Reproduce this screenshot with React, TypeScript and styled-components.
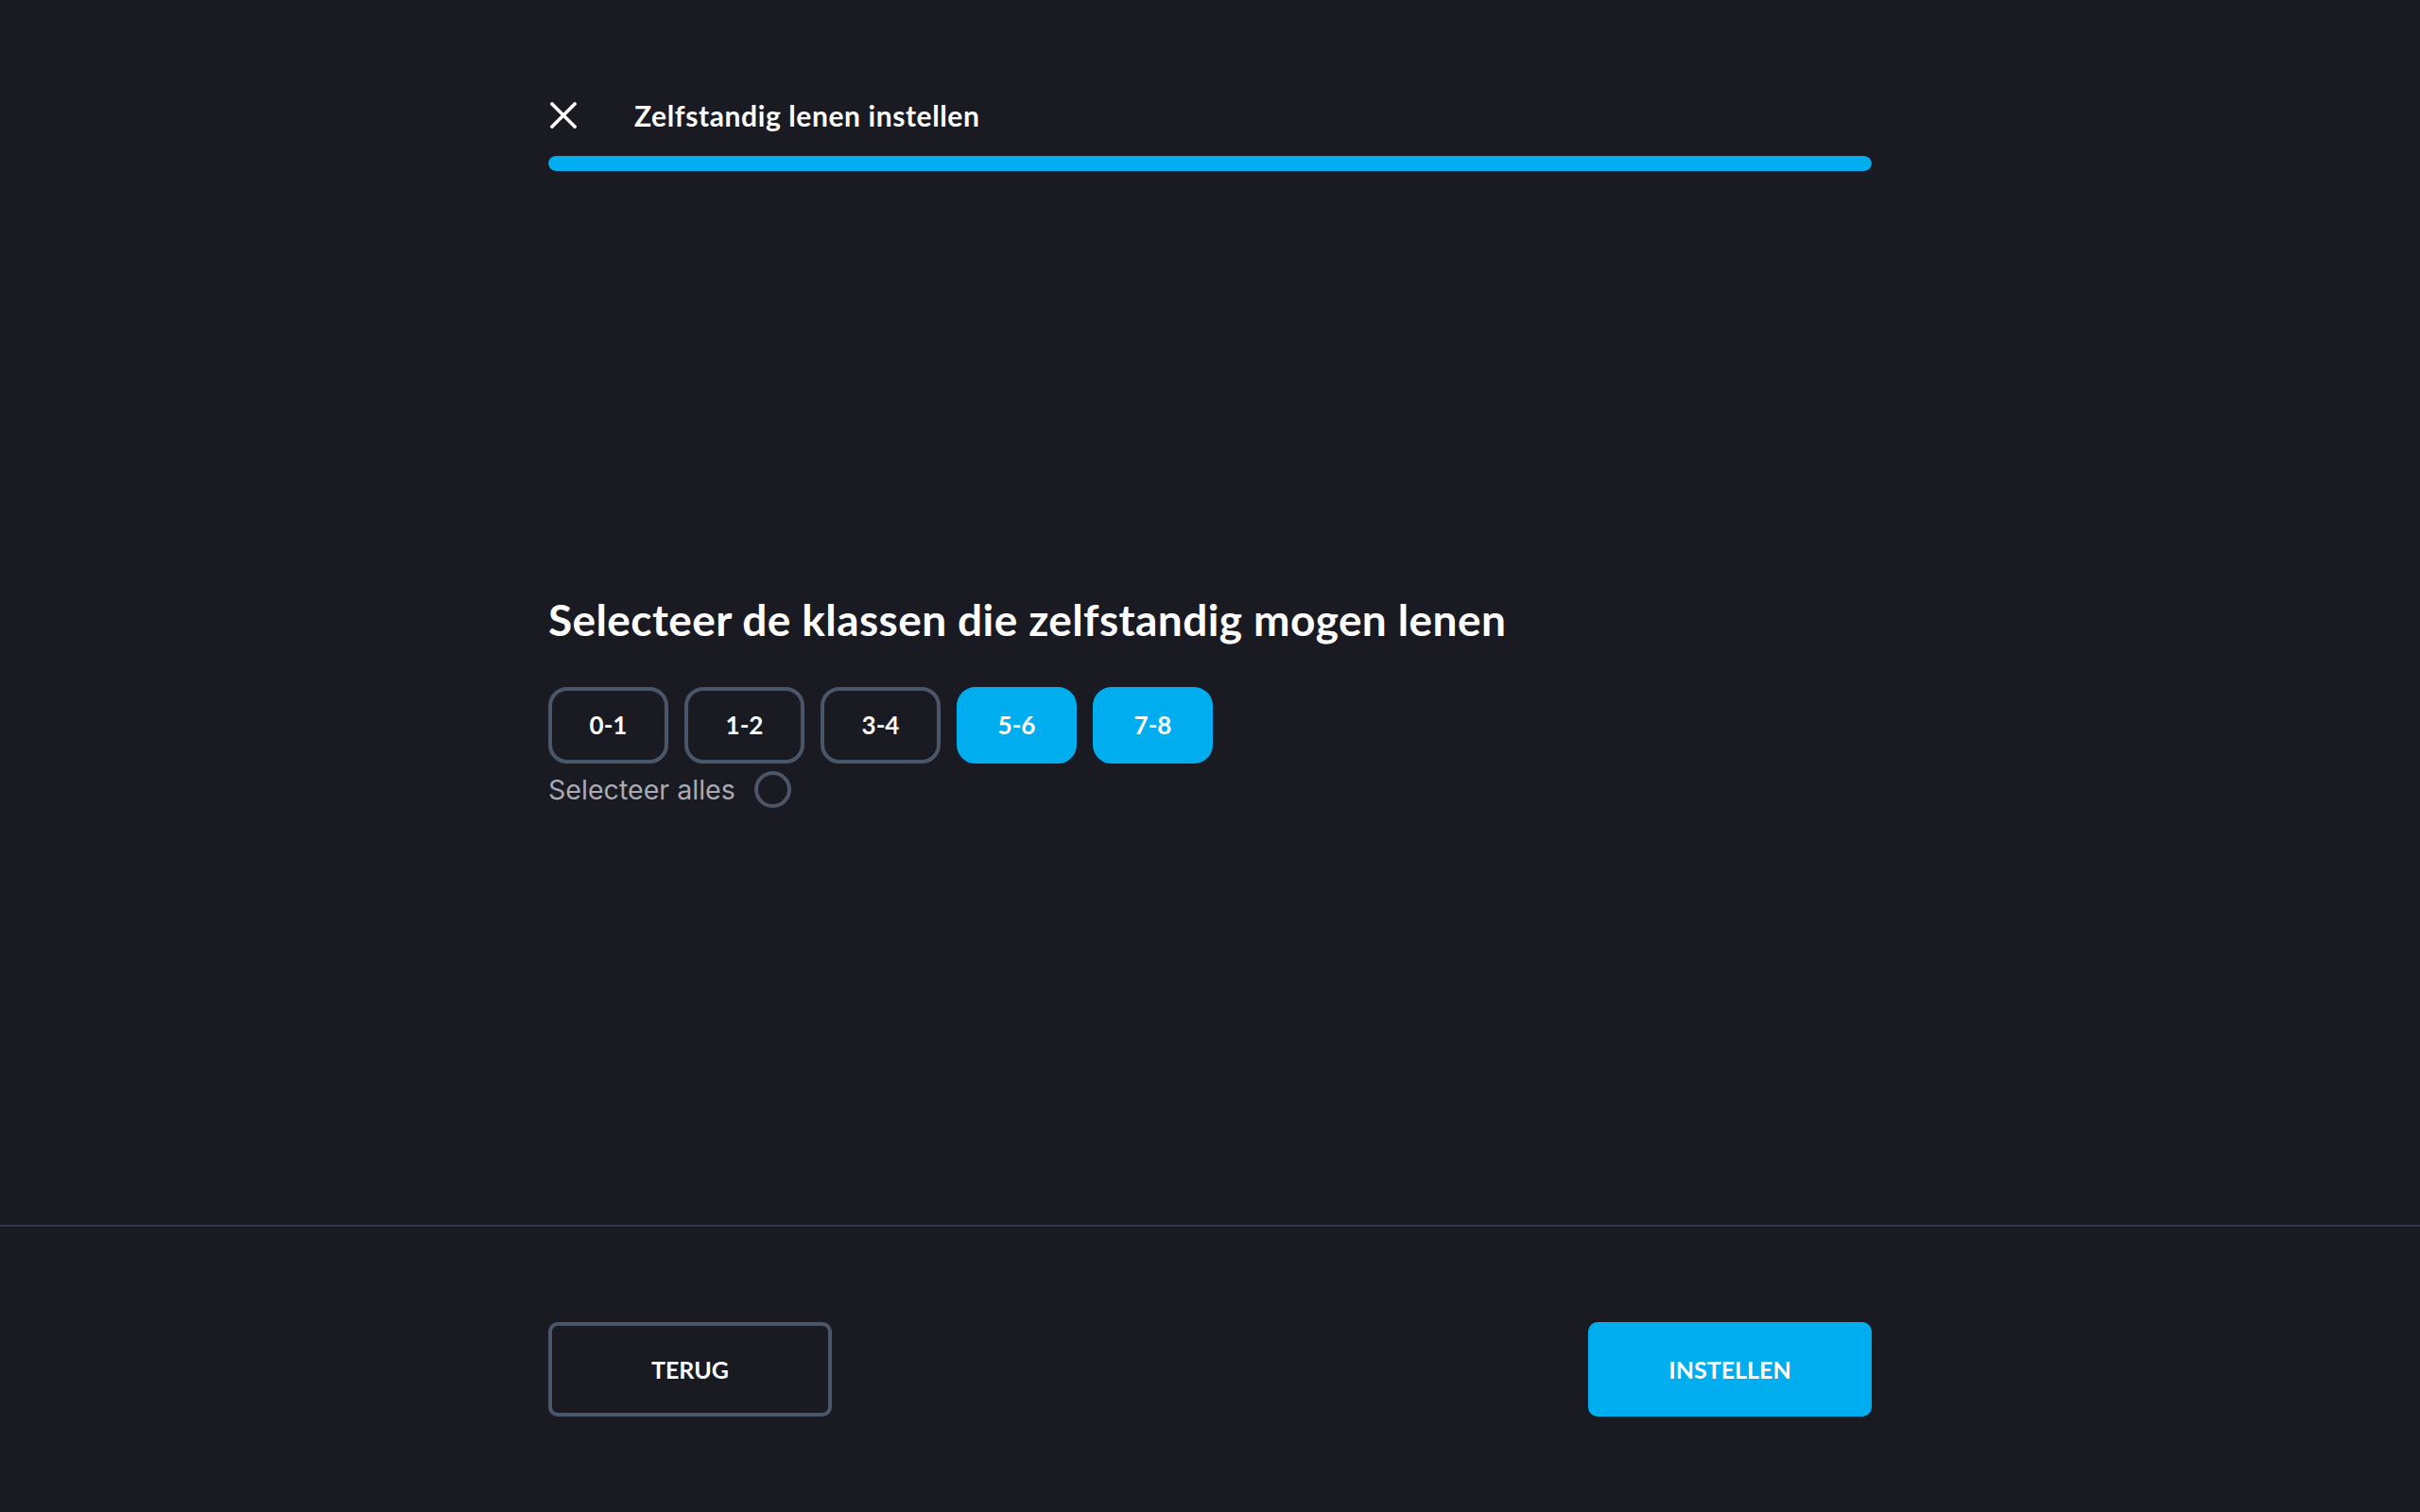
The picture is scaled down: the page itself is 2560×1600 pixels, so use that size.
import React, { useState } from "react";
import styled, { createGlobalStyle } from "styled-components";

const GlobalStyle = createGlobalStyle`
  html, body { margin: 0; padding: 0; background: #1a1a23; }
  * { box-sizing: border-box; }
`;

const Page = styled.div`
  min-height: 100vh;
  display: flex;
  flex-direction: column;
  background: #1a1a23;
  color: #ffffff;
  font-family: Lato, "Noto Sans", sans-serif;
`;

const Main = styled.main`
  height: 1296px;
  display: flex;
  flex-direction: column;
  align-items: center;
`;

const Container = styled.div`
  width: 1400px;
`;

const Header = styled(Container)`
  padding-top: 100px;
`;

const HeaderRow = styled.div`
  display: flex;
  align-items: center;
  height: 44px;
`;

const CloseButton = styled.button`
  width: 30px;
  height: 30px;
  padding: 0;
  margin: 0 60px 0 1px;
  background: none;
  border: none;
  display: flex;
  align-items: center;
  justify-content: center;
  cursor: pointer;
`;

const Title = styled.h1`
  margin: 0;
  font-size: 30px;
  letter-spacing: 0.6px;
  font-weight: 700;
  line-height: 1;
  color: #fff;
`;

const Progress = styled.div`
  margin-top: 21px;
  height: 16px;
  border-radius: 8px;
  background: #2a2a36;
  overflow: hidden;
`;

const ProgressFill = styled.div`
  height: 100%;
  border-radius: 8px;
  background: #00aeef;
`;

const Content = styled(Container)`
  flex: 1;
  display: flex;
  flex-direction: column;
  justify-content: center;
  padding-top: 6px;
`;

const Heading = styled.h2`
  margin: 0;
  font-size: 46px;
  letter-spacing: 0.4px;
  line-height: 1.2;
  font-weight: 700;
  color: #fff;
`;

const ClassRow = styled.div`
  display: flex;
  gap: 17px;
  margin-top: 43px;
`;

const ClassButton = styled.button<{ $selected: boolean }>`
  width: 127px;
  height: 81px;
  border-radius: 20px;
  border: 4px solid ${(p) => (p.$selected ? "#00aeef" : "#4b5669")};
  background: ${(p) => (p.$selected ? "#00aeef" : "transparent")};
  color: #fff;
  font-family: Lato, "Noto Sans", sans-serif;
  font-weight: 700;
  font-size: 26px;
  cursor: pointer;
  padding: 0;
`;

const SelectAllRow = styled.label`
  display: flex;
  align-items: center;
  gap: 20px;
  margin-top: 8px;
  font-family: Inter, "Noto Sans", sans-serif;
  font-size: 28.6px;
  color: #a8abb3;
  cursor: pointer;
`;

const Radio = styled.span<{ $checked: boolean }>`
  width: 39px;
  height: 39px;
  border-radius: 50%;
  border: 4px solid #4b5669;
  background: ${(p) => (p.$checked ? "#00aeef" : "transparent")};
`;

const Footer = styled.footer`
  height: 304px;
  border-top: 2px solid #36354b;
  display: flex;
  justify-content: center;
  align-items: center;
`;

const FooterInner = styled(Container)`
  display: flex;
  justify-content: space-between;
  align-items: center;
`;

const ActionButton = styled.button<{ $primary?: boolean }>`
  width: 300px;
  height: 100px;
  border-radius: 10px;
  border: 4px solid ${(p) => (p.$primary ? "#00aeef" : "#4b5669")};
  background: ${(p) => (p.$primary ? "#00aeef" : "transparent")};
  color: #fff;
  font-family: Lato, "Noto Sans", sans-serif;
  font-weight: 700;
  font-size: 25px;
  text-transform: uppercase;
  cursor: pointer;
`;

const classes = ["0-1", "1-2", "3-4", "5-6", "7-8"];

export default function App() {
  const [selected, setSelected] = useState<string[]>(["5-6", "7-8"]);
  const allSelected = selected.length === classes.length;
  const toggle = (c: string) =>
    setSelected((s) => (s.includes(c) ? s.filter((x) => x !== c) : [...s, c]));

  return (
    <>
      <GlobalStyle />
      <Page>
        <Main>
          <Header>
            <HeaderRow>
              <CloseButton aria-label="Sluiten">
                <svg width="28" height="28" viewBox="0 0 28 28" fill="none">
                  <path d="M2 2 L26 26 M26 2 L2 26" stroke="#fff" strokeWidth="3.6" strokeLinecap="square" />
                </svg>
              </CloseButton>
              <Title>Zelfstandig lenen instellen</Title>
            </HeaderRow>
            <Progress>
              <ProgressFill style={{ width: "100%" }} />
            </Progress>
          </Header>
          <Content>
            <Heading>Selecteer de klassen die zelfstandig mogen lenen</Heading>
            <ClassRow>
              {classes.map((c) => (
                <ClassButton key={c} $selected={selected.includes(c)} onClick={() => toggle(c)}>
                  {c}
                </ClassButton>
              ))}
            </ClassRow>
            <SelectAllRow onClick={() => setSelected(allSelected ? [] : [...classes])}>
              Selecteer alles
              <Radio $checked={allSelected} />
            </SelectAllRow>
          </Content>
        </Main>
        <Footer>
          <FooterInner>
            <ActionButton>Terug</ActionButton>
            <ActionButton $primary>Instellen</ActionButton>
          </FooterInner>
        </Footer>
      </Page>
    </>
  );
}
